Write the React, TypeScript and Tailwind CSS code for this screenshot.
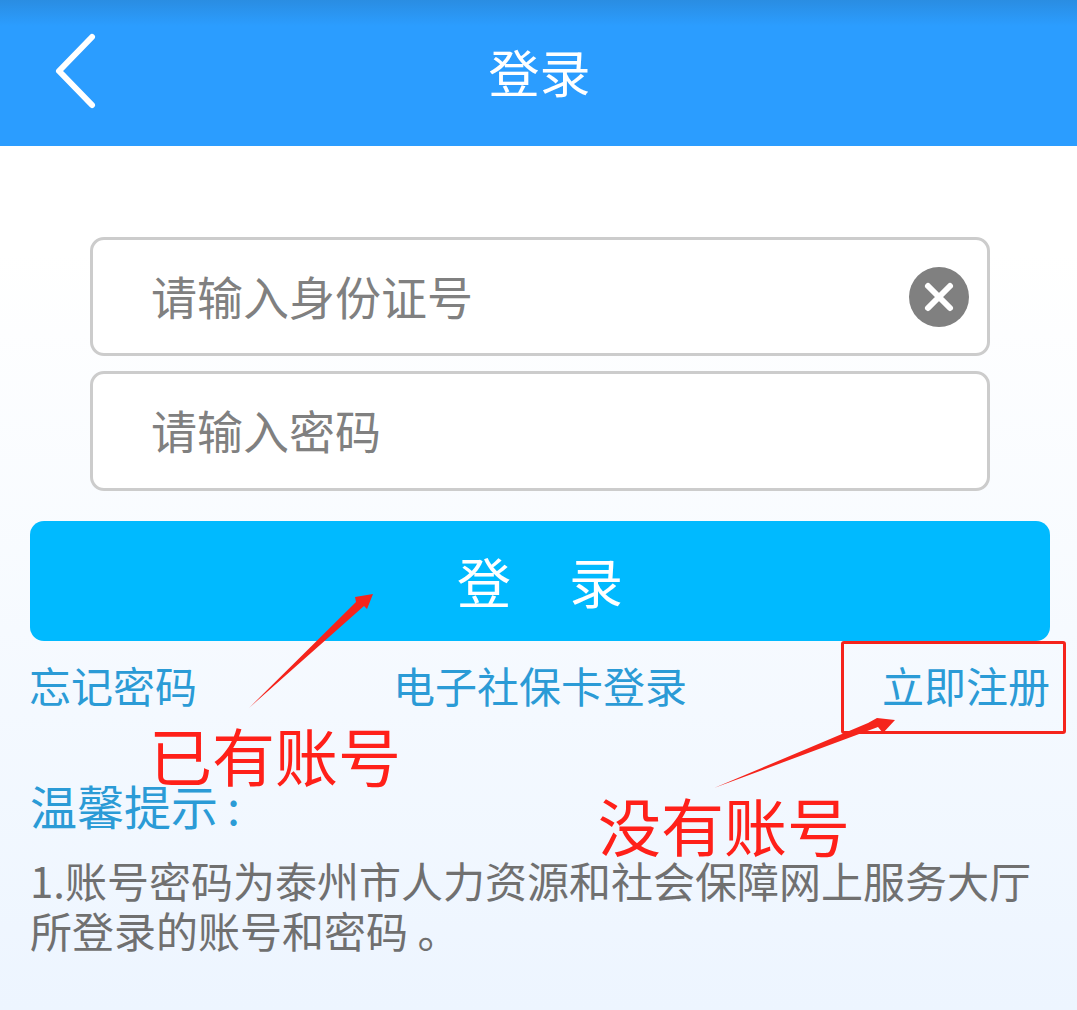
const cjk = { fontFamily: '"Noto Sans CJK SC", "Noto Sans", sans-serif' }

function ClearIcon() {
  return (
    <svg className="mt-[4px]" width="60" height="60" viewBox="0 0 60 60">
      <circle cx="30" cy="30" r="30" fill="#808080" />
      <path d="M19 19 L41 41 M41 19 L19 41" stroke="#fff" strokeWidth="6" strokeLinecap="round" />
    </svg>
  )
}

function Field({ label, clear, tall }: { label: string; clear?: boolean; tall?: boolean }) {
  return (
    <div className={`flex items-center justify-between pb-[4px] pl-[58px] pr-[18px] bg-white border-[3px] border-[#cccccc] rounded-[14px] ${tall ? 'h-[120px]' : 'h-[119px]'}`}>
      <span className="text-[46px] leading-none text-[#808080]">{label}</span>
      {clear && <ClearIcon />}
    </div>
  )
}

export default function App() {
  return (
    <div
      className="relative w-[1077px] h-[1010px] overflow-hidden bg-gradient-to-b from-white from-[25%] to-[#edf5ff]"
      style={cjk}
    >
      <header className="relative flex items-center justify-center h-[146px] bg-[#2b9dff]">
        <div className="absolute inset-x-0 top-0 h-[26px] bg-gradient-to-b from-[#2a8de2] to-[#2b9dff]" />
        <svg className="absolute left-[50px] top-[30px]" width="52" height="82" viewBox="0 0 52 82">
          <path d="M42 7 L9 41 L42 75" fill="none" stroke="#fff" strokeWidth="6" strokeLinecap="round" strokeLinejoin="round" />
        </svg>
        <h1 className="relative ml-[2px] mb-[4px] text-[51px] leading-none font-normal text-white">登录</h1>
      </header>

      <main className="flex flex-col pt-[91px]">
        <div className="flex flex-col gap-[15px] ml-[90px] mr-[87px]">
          <Field label="请输入身份证号" clear />
          <Field label="请输入密码" tall />
        </div>

        <button className="flex items-center justify-center h-[120px] ml-[30px] mr-[27px] mt-[30px] bg-[#00baff] rounded-[14px] text-[54px] leading-none text-white">
          <span>登</span>
          <span className="ml-[58px]">录</span>
        </button>

        <nav className="flex items-center justify-between h-[48px] ml-[29px] mr-[27px] mt-[20px] text-[42px] leading-none text-[#2b9bd6]">
          <a>忘记密码</a>
          <a className="ml-[1px]">电子社保卡登录</a>
          <a>立即注册</a>
        </nav>

        <section className="ml-[30px] mr-[27px] mt-[71px]">
          <h2 className="text-[47px] leading-[50px] font-normal text-[#2b9bd6]">
            温馨提示<span className="ml-[9px]">:</span>
          </h2>
          <p className="mt-[25px] text-[42px] leading-[50px] whitespace-nowrap text-[#707070]">
            1.账号密码为泰州市人力资源和社会保障网上服务大厅
            <br />
            所登录的账号和密码 。
          </p>
        </section>
      </main>

      {/* red annotations drawn on top of the screenshot */}
      <div className="absolute left-[841px] top-[641px] w-[225px] h-[93px] border-[3px] border-[#f5241c] rounded-[3px]" />
      <span className="absolute left-[149px] top-[722px] text-[63px] leading-none text-[#ff2019]">已有账号</span>
      <span className="absolute left-[598px] top-[792px] text-[63px] leading-none text-[#ff2019]">没有账号</span>
      <svg className="absolute inset-0 pointer-events-none" width="1077" height="1010" viewBox="0 0 1077 1010">
        <polygon points="249,708 356,602 355,597 373,594 367,609 364,606" fill="#f5241c" />
        <polygon points="714,788 868,723 877,718 895,720 883,733 878,727" fill="#f5241c" />
      </svg>
    </div>
  )
}
